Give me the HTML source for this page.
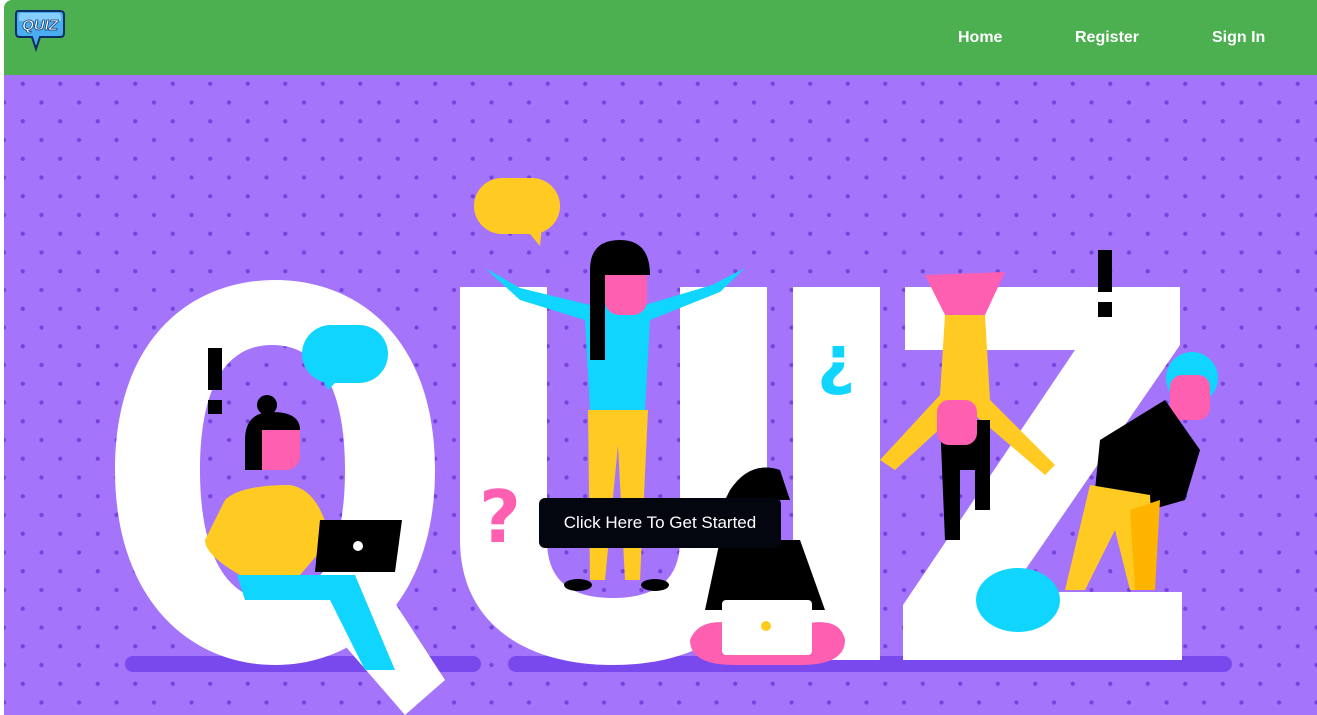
<!DOCTYPE html>
<html><head><style>
html,body{margin:0;padding:0;width:1317px;height:715px;overflow:hidden;background:#fff;font-family:"Liberation Sans",Arial,sans-serif}
.nav{position:absolute;left:4px;top:0;width:1313px;height:75px;background:#4caf50;border-top-left-radius:8px}
.nav a{position:absolute;top:29px;color:#fff;font-weight:bold;font-size:16px;text-decoration:none}
.hero{position:absolute;left:4px;top:75px;width:1313px;height:640px;background-color:#a474fb;
background-image:radial-gradient(circle,#7443e0 1.8px,transparent 2.4px),radial-gradient(circle,#7443e0 1.8px,transparent 2.4px);
background-size:37.5px 37.5px;background-position:0 -10px,18.75px 8.75px}
.btn{position:absolute;left:539px;top:498px;width:242px;height:50px;background:#03050f;border-radius:6px;color:#fff;font-size:17px;line-height:50px;text-align:center}
</style></head><body>
<div class="nav">
<svg style="position:absolute;left:10px;top:9px" width="52" height="44" viewBox="0 0 52 44">
<path d="M4 2 H46 Q50 2 50 6 V24 Q50 28 46 28 H26 L22 40 L18 28 H6 Q2 28 2 24 V6 Q2 2 4 2Z" fill="#48aef0" stroke="#0c2d66" stroke-width="2"/>
<path d="M6 4 H44 Q47 4 47 7 V12 H5 V7Z" fill="#9fdcff" opacity=".7"/>
<text x="26" y="21" text-anchor="middle" font-family="Liberation Sans" font-weight="bold" font-style="italic" font-size="15" fill="#fff" stroke="#0c2d66" stroke-width=".7">QUIZ</text>
</svg>
<a style="left:954px">Home</a>
<a style="left:1071px">Register</a>
<a style="left:1208px">Sign In</a>
</div>
<div class="hero"></div>
<svg style="position:absolute;left:0;top:75px" width="1317" height="640" viewBox="0 75 1317 640">
<rect x="125" y="656" width="356" height="16" rx="8" fill="#7a49ee"/>
<rect x="508" y="656" width="724" height="16" rx="8" fill="#7a49ee"/>
<path fill="#fff" fill-rule="evenodd" d="M275 280 C190 280 115 340 115 470 C115 600 190 665 275 665 C360 665 435 600 435 470 C435 340 360 280 275 280Z M272 345 C230 345 200 380 200 470 C200 560 230 600 272 600 C315 600 345 560 345 470 C345 380 315 345 272 345Z"/>
<path fill="#fff" d="M330 600 L380 580 L445 680 L405 715 L340 640Z"/>
<path fill="#fff" d="M460 287 H547 V540 C547 580 570 598 613 598 C656 598 680 580 680 540 V287 H767 V540 C767 620 705 665 613 665 C521 665 460 620 460 540Z"/>
<rect x="793" y="287" width="87" height="373" fill="#fff"/>
<path fill="#fff" d="M905 287 H1180 V345 L1010 592 H1182 V660 H903 V605 L1075 350 H905Z"/>
<rect x="474" y="178" width="86" height="56" rx="28" fill="#ffcb22"/><path d="M525 228 L540 246 L542 225Z" fill="#ffcb22"/>
<rect x="302" y="325" width="86" height="58" rx="29" fill="#10d6ff"/><path d="M320 375 L328 390 L340 378Z" fill="#10d6ff"/>
<ellipse cx="1018" cy="600" rx="42" ry="32" fill="#10d6ff"/>
<rect x="208" y="348" width="14" height="42" fill="#000"/><rect x="208" y="400" width="14" height="14" fill="#000"/>
<rect x="1098" y="250" width="14" height="42" fill="#000"/><rect x="1098" y="302" width="14" height="15" fill="#000"/>
<text x="500" y="542" font-family="DejaVu Sans" font-weight="bold" font-size="72" fill="#ff5fb0" text-anchor="middle">?</text>
<text x="836" y="382" font-family="DejaVu Sans" font-weight="bold" font-size="66" fill="#10d6ff" text-anchor="middle">¿</text>
<path d="M485 268 L520 300 L585 320 L590 410 L645 410 L650 320 L720 292 L745 268 L712 285 L645 305 L590 305 L520 288Z" fill="#10d6ff"/>
<path d="M588 410 H648 L640 580 H625 L618 445 L605 580 H590Z" fill="#ffcb22"/>
<ellipse cx="578" cy="585" rx="14" ry="6" fill="#000"/><ellipse cx="655" cy="585" rx="14" ry="6" fill="#000"/>
<rect x="605" y="255" width="42" height="60" rx="14" fill="#ff5fb0"/>
<path d="M590 360 V270 Q590 240 620 240 Q650 240 650 275 H605 V360Z" fill="#000"/>
<circle cx="267" cy="405" r="10" fill="#000"/>
<rect x="250" y="415" width="50" height="55" rx="14" fill="#ff5fb0"/>
<path d="M245 440 Q245 412 272 412 Q300 412 300 430 H262 V470 H245Z" fill="#000"/>
<path d="M225 500 Q240 485 290 485 Q320 490 330 540 L300 575 H240 Q205 555 205 540Z" fill="#ffcb22"/>
<path d="M237 575 H355 L395 670 H365 L330 600 H245Z" fill="#10d6ff"/>
<path d="M320 520 H402 L395 572 H315Z" fill="#000"/><circle cx="358" cy="546" r="5" fill="#fff"/>
<path d="M690 640 Q700 615 740 625 H800 Q840 615 845 640 Q845 665 800 665 H735 Q690 665 690 640Z" fill="#ff5fb0"/>
<path d="M720 540 H800 L825 610 H705Z" fill="#000"/>
<path d="M730 490 Q750 460 780 470 L790 500 H725Z" fill="#000"/>
<rect x="722" y="600" width="90" height="55" rx="4" fill="#fff"/><circle cx="766" cy="626" r="5" fill="#ffcb22"/>
<path d="M925 275 L1005 272 L985 315 H945Z" fill="#ff5fb0"/>
<path d="M945 315 H985 L990 400 L1055 465 L1045 475 L975 415 H955 L895 470 L880 460 L940 395Z" fill="#ffcb22"/>
<path d="M940 420 H990 V510 H975 V470 H960 V540 H945Z" fill="#000"/>
<rect x="937" y="400" width="40" height="45" rx="12" fill="#ff5fb0"/>
<circle cx="1192" cy="378" r="26" fill="#10d6ff"/>
<rect x="1170" y="375" width="40" height="45" rx="12" fill="#ff5fb0"/>
<path d="M1100 440 L1165 400 L1200 450 L1185 500 L1150 510 L1095 490Z" fill="#000"/>
<path d="M1090 485 L1150 495 L1155 590 H1130 L1115 530 L1085 590 H1065Z" fill="#ffcb22"/>
<path d="M1130 510 L1160 500 L1155 590 H1135Z" fill="#ffb400"/>
</svg>
<div class="btn">Click Here To Get Started</div>
</body></html>
